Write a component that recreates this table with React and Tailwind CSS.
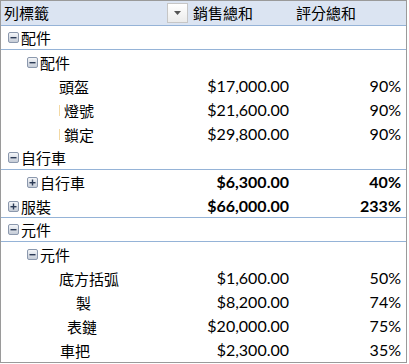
const cjk = { fontFamily: '"Noto Sans CJK TC", "Noto Sans", sans-serif' };
const num = { fontFamily: 'Lato, "Liberation Sans", sans-serif' };

const rows = [
  { label: '配件', pad: 7, icon: 'minus', line: true },
  { label: '配件', pad: 26, icon: 'minus' },
  { label: '頭盔', pad: 58, sales: '$17,000.00', score: '90%' },
  { label: '燈號', pad: 58, mark: true, sales: '$21,600.00', score: '90%' },
  { label: '鎖定', pad: 58, mark: true, sales: '$29,800.00', score: '90%' },
  { label: '自行車', pad: 7, icon: 'minus', line: true },
  { label: '自行車', pad: 26, icon: 'plus', sales: '$6,300.00', score: '40%', bold: true },
  { label: '服裝', pad: 7, icon: 'plus', sales: '$66,000.00', score: '233%', bold: true, line: true },
  { label: '元件', pad: 7, icon: 'minus', line: true },
  { label: '元件', pad: 26, icon: 'minus' },
  { label: '底方括弧', pad: 58, sales: '$1,600.00', score: '50%' },
  { label: '製', pad: 75, sales: '$8,200.00', score: '74%' },
  { label: '表鏈', pad: 66, sales: '$20,000.00', score: '75%' },
  { label: '車把', pad: 59, sales: '$2,300.00', score: '35%' },
];

function Toggle({ type }) {
  return (
    <span className="mr-[2px] flex h-[11px] w-[11px] shrink-0 items-center justify-center rounded-[2px] border border-[#8b98ad] bg-gradient-to-b from-[#f4f6f9] to-[#c5ccd7]">
      <svg width="7" height="7" viewBox="0 0 7 7">
        <rect x="0.5" y="3" width="6" height="1.4" fill="#2b3a55" />
        {type === 'plus' && <rect x="2.8" y="0.5" width="1.4" height="6" fill="#2b3a55" />}
      </svg>
    </span>
  );
}

export default function App() {
  return (
    <div className="h-[364px] w-[409px] bg-white">
      <div className="flex h-[363px] w-[407px] flex-col border border-[#9a9a9a] text-[15px] text-black">
        <div className="grid h-[25px] shrink-0 grid-cols-[188px_103px_1fr] items-center border-b border-[#95b3d7] bg-[#dbe4f2]">
          <div className="flex items-center justify-between pl-[3px] pr-[1px]" style={cjk}>
            <span>列標籤</span>
            <span className="flex h-[20px] w-[21px] items-center justify-center border border-[#c6c6c6] bg-gradient-to-b from-white to-[#ebebeb]">
              <svg width="7" height="4" viewBox="0 0 7 4">
                <path d="M0 0H7L3.5 4Z" fill="#555" />
              </svg>
            </span>
          </div>
          <div className="pl-[4px]" style={cjk}>銷售總和</div>
          <div className="pl-[4px]" style={cjk}>評分總和</div>
        </div>
        {rows.map((r, i) => (
          <div
            key={i}
            className={`grid h-[24px] shrink-0 grid-cols-[188px_103px_1fr] items-center ${r.line ? 'border-b border-[#95b3d7]' : ''}`}
          >
            <div className="flex items-center" style={{ paddingLeft: r.pad }}>
              {r.icon && <Toggle type={r.icon} />}
              {r.mark && <span className="mr-[4px] h-[11px] w-px bg-[#f3d9a4]" />}
              <span style={cjk} className="leading-none">{r.label}</span>
            </div>
            <div className={`pr-[3px] text-right text-[16px] ${r.bold ? 'font-bold' : ''}`} style={num}>
              {r.sales}
            </div>
            <div className={`pr-[5px] text-right text-[16px] ${r.bold ? 'font-bold' : ''}`} style={num}>
              {r.score}
            </div>
          </div>
        ))}
      </div>
    </div>
  );
}
